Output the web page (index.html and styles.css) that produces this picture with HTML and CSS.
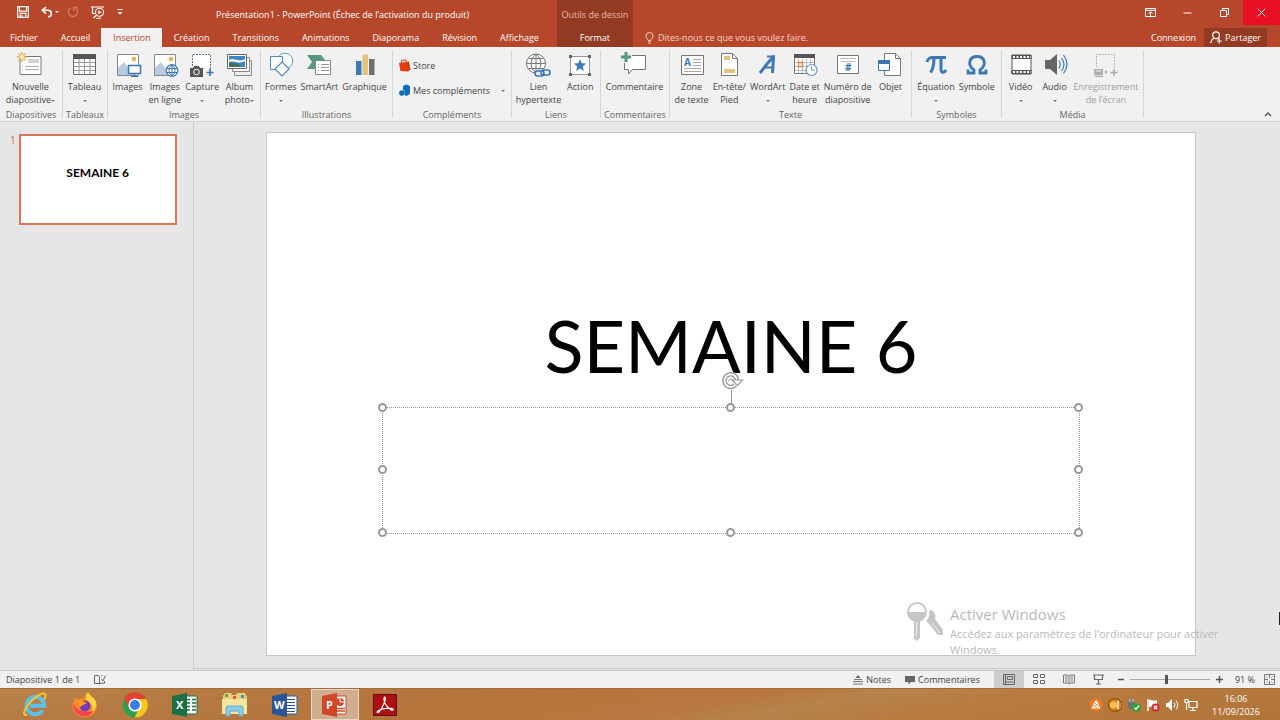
FILE: index.html
```html
<!DOCTYPE html>
<html lang="fr">
<head>
<meta charset="utf-8">
<title>Présentation1 - PowerPoint</title>
<link rel="stylesheet" href="styles.css">
</head>
<body>
<header class="titlebar">
  <div class="caption">
    <div class="quick">
      <button aria-label="Enregistrer"><svg width="12" height="12" viewBox="0 0 12 12"><path d="M.7.7h10.6v10.6H.7zM2.5 1v4.2h7V1M3.2 11V7.4h5.6V11M5 9v2" fill="none" stroke="#fff" stroke-width="1.2"/></svg></button>
      <button class="undo" aria-label="Annuler"><svg width="12" height="12" viewBox="0 0 12 12"><path d="M5 1 1.2 4.3 5 7.6M1.5 4.3H7a3.3 3.3 0 0 1 0 6.6" fill="none" stroke="#fff" stroke-width="1.6"/></svg><i class="caret"></i></button>
      <button aria-label="Répéter"><svg width="12" height="12" viewBox="0 0 12 12"><path d="M3.2 2.2a4.6 4.6 0 1 0 5.6.1M6.7 5V1.5h3.8" fill="none" stroke="#cf7a62" stroke-width="1.4"/></svg></button>
      <button aria-label="Diaporama"><svg width="14" height="13" viewBox="0 0 14 13"><path d="M0 1h13M1.5 1v6.5H5M2.5 12 6 8.5" fill="none" stroke="#fff" stroke-width="1.2"/><circle cx="8.5" cy="6.3" r="4" fill="#b7472a" stroke="#fff" stroke-width="1.1"/><path d="m7.3 4.3 3.3 2-3.3 2z" fill="#fff"/><path d="M5 12.3h5" stroke="#fff"/></svg></button>
      <button aria-label="Personnaliser"><svg width="6" height="8" viewBox="0 0 6 8"><path d="M.5 1.5h5" stroke="#fff"/><path d="M.5 4h5L3 6.8z" fill="#fff"/></svg></button>
    </div>
    <h1 class="doc-title">Présentation1 - PowerPoint (Échec de l’activation du produit)</h1>
  </div>
  <nav class="tabs">
    <button>Fichier</button><button>Accueil</button><button class="active">Insertion</button><button>Création</button><button>Transitions</button><button>Animations</button><button>Diaporama</button><button>Révision</button><button>Affichage</button>
  </nav>
  <div class="context"><span>Outils de dessin</span><button>Format</button></div>
  <div class="window-controls">
    <button aria-label="Options du ruban"><svg width="11" height="9" viewBox="0 0 11 9"><path d="M.5.5h10v8H.5zM.5 2.3h10M5.5 8V4M3.6 5.6l1.9-1.9 1.9 1.9" fill="none" stroke="#fff"/></svg></button>
    <button aria-label="Réduire"><svg width="9" height="9" viewBox="0 0 9 9"><path d="M.5 5h8" stroke="#fff"/></svg></button>
    <button aria-label="Restaurer"><svg width="9" height="9" viewBox="0 0 9 9"><path d="M.5 2.5h6v6h-6zM2.5 2V.5h6v6H7" fill="none" stroke="#fff"/></svg></button>
    <button class="close" aria-label="Fermer"><svg width="9" height="9" viewBox="0 0 9 9"><path d="m.7.7 7.6 7.6M8.3.7.7 8.3" stroke="#fff"/></svg></button>
  </div>
  <div class="tools">
    <label class="tell"><svg width="9" height="12" viewBox="0 0 9 12"><path d="M3 8.400C3 7 1 6 1 4a3.500 3.500 0 0 1 7 0c0 2-2 3-2 4.400zM3.200 9.800h2.600M3.500 11.300h2" fill="none" stroke="#f6d5cb"/></svg><input type="text" aria-label="Rechercher" placeholder="Dites-nous ce que vous voulez faire."></label>
    <button class="login">Connexion</button>
    <button class="share"><svg width="12" height="13" viewBox="0 0 12 13"><circle cx="6" cy="4.200" r="3.400" fill="none" stroke="#fff" stroke-width="1.200"/><path d="M.8 12c.2-2.600 1.400-4 3.400-4.700M7.500 7.500l1 .8M9.300 7.500v5M6.800 10h5" fill="none" stroke="#fff" stroke-width="1.200"/></svg>Partager</button>
  </div>
</header>

<section class="ribbon" aria-label="Insertion">
  <div class="group g-slides">
    <div class="items">
      <button><svg class="ic" viewBox="0 0 28 26"><path d="M4 5.500h21v18H4z" fill="#fff" stroke="#777"/><path d="M12 8h11v4H12z" fill="#d2d2d2"/><path d="M9 15.500h14M9 18.500h14M6 15.500h1M6 18.500h1" stroke="#aaa"/><path d="M6 1v10M1 6h10M2.500 2.500l7 7M9.500 2.500l-7 7" stroke="#e8b658" stroke-width="1.500"/><circle cx="6" cy="6" r="2" fill="#fff3cf"/></svg><span>Nouvelle<br>diapositive<i class="caret"></i></span></button>
    </div><h2>Diapositives</h2>
  </div>
  <div class="group g-tables">
    <div class="items">
      <button><svg class="ic" viewBox="0 0 28 26"><path d="M2.500 4.500h22v19h-22z" fill="#fff" stroke="#666"/><path d="M2 3h23v5H2z" fill="#555"/><path d="M3 11.500h21M3 15.500h21M3 19.500h21M8 8v15M13.500 8v15M19 8v15" stroke="#999"/></svg><span>Tableau<br><i class="caret"></i></span></button>
    </div><h2>Tableaux</h2>
  </div>
  <div class="group g-images">
    <div class="items even">
      <button><svg class="ic" viewBox="0 0 28 26"><path d="M3.500 3.500h21v21h-21z" fill="#fff" stroke="#888"/><path d="M4 24v-7l6-6 9 13z" fill="#b7cbe3"/><circle cx="20" cy="8" r="2.300" fill="#e4b552"/><path d="M14.500 14.500h12v8h-12z" fill="#fff" stroke="#3b76b5" stroke-width="1.500"/><path d="M20.500 23v2M17 25.500h7" stroke="#3b76b5" stroke-width="1.300"/></svg><span>Images</span></button>
      <button><svg class="ic" viewBox="0 0 28 26"><path d="M3.500 3.500h21v21h-21z" fill="#fff" stroke="#888"/><path d="M4 24v-7l6-6 9 13z" fill="#b7cbe3"/><circle cx="20" cy="8" r="2.300" fill="#e4b552"/><circle cx="21" cy="19.500" r="5.800" fill="#fff" stroke="#3b76b5" stroke-width="1.200"/><path d="M15.500 17.500h11M15.500 21.500h11M21 14v11M21 14c-4 3-4 8 0 11c4-3 4-8 0-11" fill="none" stroke="#3b76b5"/></svg><span>Images<br>en ligne</span></button>
      <button><svg class="ic" viewBox="0 0 28 26"><path d="M4.500 15V3.500h18V18" fill="#fff" stroke="#777" stroke-dasharray="2 1"/><path d="M2 17h3l1-2h5l1 2h3v9H2z" fill="#555"/><circle cx="8.500" cy="21" r="2.800" fill="#555" stroke="#fff"/><path d="M22 18v7M18.500 21.500h7" stroke="#3b76b5" stroke-width="1.700"/></svg><span>Capture<br><i class="caret"></i></span></button>
      <button><svg class="ic" viewBox="0 0 28 26"><path d="M12.500 9.500h14v15h-17v-4" fill="#eee" stroke="#888"/><path d="M7.500 6.500h17v14h-17z" fill="#fff" stroke="#888"/><path d="M2.500 3.500h19v14h-19z" fill="#fff" stroke="#666"/><path d="M4 5h16v11H4z" fill="#3b86c4"/><path d="M4 9c5-3 9 3 16-1v2c-7 4-10-1-16 1z" fill="#fff"/><path d="M4 16v-4c5-1 9 0 13 4z" fill="#44705c"/></svg><span>Album<br>photo<i class="caret"></i></span></button>
    </div><h2>Images</h2>
  </div>
  <div class="group g-illus">
    <div class="items">
      <button><svg class="ic" viewBox="0 0 28 26"><circle cx="18" cy="10" r="7.800" fill="#f9f9f9" stroke="#6d9bc9"/><path d="M3.500 5.500h12v13h-12z" fill="#fff" stroke="#5288bd"/><path d="m15 11 7 7-7 7-7-7z" fill="#fff" stroke="#5288bd" stroke-width="1.200"/></svg><span>Formes<br><i class="caret"></i></span></button>
      <button><svg class="ic" viewBox="0 0 28 26"><path d="M2 4h14l5 6-5 8H2l5-7z" fill="#559a80"/><path d="M10.500 9.500h15v14h-15z" fill="#fff" stroke="#888"/><path d="M13 13.500h1M16 13.500h8M13 16.500h1M16 16.500h8M13 19.500h1M16 19.500h8" stroke="#999"/></svg><span>SmartArt</span></button>
      <button><svg class="ic" viewBox="0 0 28 26"><path d="M5 10h5.500v14H5z" fill="#3e78b3"/><path d="M11.500 3.500H17V24h-5.500z" fill="#e3c27c"/><path d="M18 8h5.500v16H18z" fill="#6f706c"/></svg><span>Graphique</span></button>
    </div><h2>Illustrations</h2>
  </div>
  <div class="group g-addins">
    <div class="stack">
      <button><svg width="12" height="13" viewBox="0 0 12 13"><path d="M0 4 10 2.500l1 8.500-2 1.500L1.500 12z" fill="#e33d0b"/><path d="M2.500 4V1.500L7 .8V3" fill="none" stroke="#e33d0b"/><path d="m9 3 2 8" stroke="#b52c05"/></svg>Store</button>
      <button class="wide"><svg width="12" height="13" viewBox="0 0 12 13"><path d="m4 2 3.500-1.500L11 2v8L7.500 12 5.500 11V7L4 6z" fill="#0a6ebd"/><circle cx="2.800" cy="9" r="2.700" fill="#0a6ebd"/></svg>Mes compléments<i class="caret"></i></button>
    </div><h2>Compléments</h2>
  </div>
  <div class="group g-links">
    <div class="items">
      <button><svg class="ic" viewBox="0 0 28 26"><circle cx="12" cy="12.500" r="9.500" fill="#fff" stroke="#777"/><path d="M12 3v19M2.500 12.500h19M4.500 7.500h15M4.500 17.500h15M12 3c-6.500 5-6.500 14 0 19c6.500-5 6.500-14 0-19" fill="none" stroke="#777"/><rect x="11" y="20" width="9" height="5" rx="2.500" fill="#f1f1f1" stroke="#3b76b5" stroke-width="1.600"/><rect x="17" y="19" width="9" height="5" rx="2.500" fill="none" stroke="#3b76b5" stroke-width="1.600"/></svg><span>Lien<br>hypertexte</span></button>
      <button><svg class="ic" viewBox="0 0 28 26"><path d="M4.500 5.500h19v18h-19z" fill="#fff" stroke="#999"/><path d="M3 4h3v3H3zM22 4h3v3h-3zM3 22h3v3H3zM22 22h3v3h-3z" fill="#666"/><path d="m14 8 1.700 4.300 4.600.3-3.600 2.900 1.200 4.500-3.900-2.500-3.900 2.500 1.200-4.500-3.600-2.900 4.600-.3z" fill="#3e7cc0"/></svg><span>Action</span></button>
    </div><h2>Liens</h2>
  </div>
  <div class="group g-comments">
    <div class="items">
      <button><svg class="ic" viewBox="0 0 28 26"><path d="M4.500 4.500h21v14h-13l-4 4.500v-4.500h-4z" fill="#fff" stroke="#777"/><path d="M6 0v12M0 6h12" stroke="#f1f1f1" stroke-width="5"/><path d="M6 1v10M1 6h10" stroke="#559a80" stroke-width="3"/></svg><span>Commentaire</span></button>
    </div><h2>Commentaires</h2>
  </div>
  <div class="group g-text">
    <div class="items">
      <button><svg class="ic" viewBox="0 0 28 26"><path d="M3.500 4.500h22v19h-22z" fill="#fff" stroke="#777"/><path d="M15 8.500h8M15 11.500h8M15 14.500h8M6 17.500h17M6 20.500h17" stroke="#aaa"/><text x="6" y="15" class="glyph g10">A</text></svg><span>Zone<br>de texte</span></button>
      <button><svg class="ic" viewBox="0 0 28 26"><path d="M6.500 2.500h11l5 5v17h-16z" fill="#fff" stroke="#777"/><path d="M17.500 2.500v5h5" fill="none" stroke="#777"/><path d="M9 5h6v4H9zM9 18h11v4H9z" fill="#e3c27c"/></svg><span>En-tête/<br>Pied</span></button>
      <button><svg class="ic" viewBox="0 0 28 26"><path d="M6 22 13 13 19.500 5.500 18.500 22" fill="none" stroke="#3e78b3" stroke-width="3" stroke-linejoin="round"/><path d="M9.500 16.500h9M13 5.500h7" stroke="#3e78b3" stroke-width="2"/></svg><span>WordArt<br><i class="caret"></i></span></button>
      <button><svg class="ic" viewBox="0 0 28 26"><path d="M3.500 3.500h20v19h-20z" fill="#fff" stroke="#777"/><path d="M3 3h21v4H3z" fill="#555"/><path d="M4 11.500h19M4 15.500h19M4 19.500h19M7.500 8v14M11.500 8v14M15.500 8v14M19.500 8v14" stroke="#bbb"/><path d="M7.500 11.500h4v4h-4z" fill="#fff" stroke="#e08443" stroke-width="1.300"/><circle cx="20.500" cy="19" r="5.500" fill="#fff" stroke="#6693bf" stroke-width="1.200"/><path d="M20.500 15.500V19h3" fill="none" stroke="#6693bf"/></svg><span>Date et<br>heure</span></button>
      <button><svg class="ic" viewBox="0 0 28 26"><path d="M3.500 4.500h21v18h-21z" fill="#fff" stroke="#777"/><path d="M6 7.500h16M7 10.500h14" stroke="#bbb"/><text x="11" y="20" class="glyph g10">#</text></svg><span>Numéro de<br>diapositive</span></button>
      <button><svg class="ic" viewBox="0 0 28 26"><path d="M8.500 2.500h11l5 5v17h-16z" fill="#fff" stroke="#777"/><path d="M19.500 2.500v5h5" fill="none" stroke="#777"/><path d="M2.500 9.500h11v10h-11z" fill="#fff" stroke="#3b76b5"/><path d="M2 9h12v4H2z" fill="#3b76b5"/></svg><span>Objet</span></button>
    </div><h2>Texte</h2>
  </div>
  <div class="group g-symbols">
    <div class="items">
      <button><svg class="ic" viewBox="0 0 28 26"><path d="M5 11C6 7 8 6.500 11 6.500h13M12 7c0 7-.5 11-3.500 14.500M19 7v11c0 4 3 4.500 5 1" fill="none" stroke="#3e78b3" stroke-width="3"/></svg><span>Équation<br><i class="caret"></i></span></button>
      <button><svg class="ic" viewBox="0 0 28 26"><path d="M5 18.500v3.500h6v-3C4 14 6 5.500 14 5.500S24 14 17 19v3h6v-3.500" fill="none" stroke="#3e78b3" stroke-width="2.800"/></svg><span>Symbole</span></button>
    </div><h2>Symboles</h2>
  </div>
  <div class="group g-media">
    <div class="items">
      <button><svg class="ic" viewBox="0 0 28 26"><path d="M5 4h19v19H5z" fill="#fff" stroke="#555"/><path d="M4.500 6h20M4.500 21h20" stroke="#555" stroke-width="4"/><path d="M6 6h18M6 21h18" stroke="#fff" stroke-width="2" stroke-dasharray="2 1.500"/></svg><span>Vidéo<br><i class="caret"></i></span></button>
      <button><svg class="ic" viewBox="0 0 28 26"><path d="M4 9h5l7-6v21l-7-6H4z" fill="#666"/><path d="M18 9.500q2.500 4 0 8M20.500 7q5 6.500 0 13M22.500 4q7 9.500 0 18.500" fill="none" stroke="#3e78b3" stroke-width="1.200"/></svg><span>Audio<br><i class="caret"></i></span></button>
      <button disabled><svg class="ic" viewBox="0 0 28 26"><path d="M4.500 16V3.500h18V18" fill="none" stroke="#b5b5b5" stroke-dasharray="2 1"/><path d="M2 18h9v6H2zM12 21l3-2v4z" fill="#b0b0b0"/><path d="M4 20h5" stroke="#eee"/><path d="M22 18v7M18.500 21.500h7M3 25.500h8" stroke="#aaa" stroke-width="1.500"/></svg><span>Enregistrement<br>de l’écran</span></button>
    </div><h2>Média</h2>
  </div>
  <button class="collapse" aria-label="Réduire le ruban"><svg width="8" height="6" viewBox="0 0 8 6"><path d="m1 5 3-3 3 3" fill="none" stroke="#555" stroke-width="1.500"/></svg></button>
</section>

<main class="workspace">
  <aside class="thumbs"><span class="num">1</span><button class="thumb">SEMAINE 6</button></aside>
  <section class="stage">
    <article class="slide">
      <h2 class="slide-title">SEMAINE 6</h2>
      <div class="placeholder">
        <i class="stem"></i>
        <svg class="rotate" width="22" height="18" viewBox="0 0 22 18"><path d="M13.300 13A6.300 6.300 0 1 1 15 8.500" fill="none" stroke="#999" stroke-width="4.500"/><path d="M13.300 13A6.300 6.300 0 1 1 15 8.500" fill="none" stroke="#fff" stroke-width="1.800"/><path d="M10 8h10.500l-5 5.500z" fill="#fff" stroke="#999" stroke-width="1.200"/><path d="M6.500 9.500a2.500 2.500 0 0 1 4-2" fill="none" stroke="#999"/></svg>
        <i class="h nw"></i><i class="h n"></i><i class="h ne"></i><i class="h w"></i><i class="h e"></i><i class="h sw"></i><i class="h s"></i><i class="h se"></i>
      </div>
    </article>
    <i class="pointer"></i>
  </section>
  <div class="watermark">
    <svg width="37" height="40" viewBox="0 0 37 40"><path d="m22 9 3-1c3 3 4 6 3 9l8 11v5h-5l-9-11-3-3c3-3 4-6 3-10z" fill="#c6c6c6"/><path d="m25 21 8 10" stroke="#eee"/><circle cx="10" cy="10" r="9" fill="#fff" stroke="#c6c6c6" stroke-width="2"/><path d="M1 10h18c0 5-2 8-6 9v17l-3 3-3-3V19c-4-1-6-4-6-9z" fill="#c6c6c6"/><path d="M9.500 20v15" stroke="#eee"/></svg>
    <div><strong>Activer Windows</strong><p>Accédez aux paramètres de l’ordinateur pour activer Windows.</p></div>
  </div>
</main>

<footer class="status">
  <span>Diapositive 1 de 1</span>
  <button class="spell" aria-label="Orthographe"><svg width="12" height="11" viewBox="0 0 12 11"><path d="M5.500 9.500H.5v-8h3.500l1.500 1V10l1.500-.8h3.500V7M7 1.500h1M7.500 5l1.500 2L11.500 1.500" fill="none" stroke="#666"/></svg></button>
  <button class="notes"><svg width="10" height="10" viewBox="0 0 10 10"><path d="m5 0 2.500 3h-5z" fill="#666"/><path d="M1 4.500h8M0 6.500h10M0 9h10" stroke="#777"/></svg>Notes</button>
  <button class="comm"><svg width="10" height="10" viewBox="0 0 10 10"><path d="M0 1h10v6H6L3.500 9.500V7H0z" fill="#666"/></svg>Commentaires</button>
  <div class="views">
    <button class="on" aria-label="Normal"><svg width="12" height="11" viewBox="0 0 12 11"><path d="M.5.5h11v10H.5zM2.500 1v9M4.500 2.500h5v3h-5zM3 8h7.500" fill="none" stroke="#666"/></svg></button>
    <button aria-label="Trieuse"><svg width="12" height="11" viewBox="0 0 12 11"><path d="M.5.5h4v3h-4zM7.500.5h4v3h-4zM.5 6.500h4v3h-4zM7.500 6.500h4v3h-4z" fill="none" stroke="#666"/></svg></button>
    <button aria-label="Lecture"><svg width="12" height="11" viewBox="0 0 12 11"><path d="M.5 1h4l1.500 1 1.500-1h4v8h-4L6 10 4.500 9h-4zM6 2v8M2 3h2.500M2 5h2.500M2 7h2.500M7.500 3H10M7.500 5H10M7.500 7H10" fill="none" stroke="#777"/></svg></button>
    <button aria-label="Diaporama"><svg width="11" height="11" viewBox="0 0 11 11"><path d="M0 1h11M1.500 1v4.500h8V1M5.500 5.500V10M3 10h5" fill="none" stroke="#666" stroke-width="1.200"/></svg></button>
  </div>
  <div class="zoom"><button aria-label="Zoom arrière"><svg width="6" height="7" viewBox="0 0 6 7"><path d="M0 3.500h6" stroke="#555" stroke-width="1.500"/></svg></button><input type="range" aria-label="Zoom" min="0" max="100" value="46"><button aria-label="Zoom avant"><svg width="7" height="7" viewBox="0 0 7 7"><path d="M0 3.500h7M3.500 0v7" stroke="#555" stroke-width="1.500"/></svg></button></div>
  <button class="pct">91 %</button>
  <button class="fit" aria-label="Ajuster"><svg width="11" height="11" viewBox="0 0 11 11"><path d="M.5.5h10v10H.5z" fill="none" stroke="#777"/><path d="M5.500 1v3M5.500 7v3M1 5.500h3M7 5.500h3M2.500 2.500l1 1M8.500 2.500l-1 1M2.500 8.500l1-1M8.500 8.500l-1-1" stroke="#777"/></svg></button>
</footer>

<footer class="taskbar">
  <div class="apps">
    <button aria-label="Internet Explorer"><svg width="26" height="26" viewBox="0 0 26 26"><path d="M20.500 18.500A8.700 8.700 0 1 1 22 13.800H8" fill="none" stroke="#56c3ec" stroke-width="4"/><path d="M5 22.500c-4 2-4-3 1-9.500S20-.5 23 2c1.500 1.500 0 4-1 5.500" fill="none" stroke="#f2c530" stroke-width="2"/></svg></button>
    <button aria-label="Firefox"><svg width="26" height="26" viewBox="0 0 26 26"><path d="M3 6c1 0 2 1 3 2 2-2 4-2 6-2 0-3 2-5 4-6 1 3 6 5 8 10 3 8-3 15-11 15S-1 19 1 11z" fill="#ff8a24"/><path d="M16 0c1 3 6 5 8 10 1 4-1 9-5 11 3-6 1-10-5-13 0-3 0-6 2-8z" fill="#ffd43d"/><path d="M1 12c3 5 10 10 20 7-3 8-19 8-20-7z" fill="#f4424f"/><circle cx="13" cy="14" r="5.500" fill="#763bb4"/><path d="M6 9c4-1 6 1 9 2-2 2-5 1-6 4-3-1-4-4-3-6z" fill="#ff9b25"/></svg></button>
    <button aria-label="Chrome"><svg width="26" height="26" viewBox="0 0 26 26"><circle cx="13" cy="13" r="12.500" fill="#2da150"/><path d="M2 7a12.500 12.500 0 0 1 22.200 0H13v6z" fill="#e34133"/><path d="M24.200 7A12.500 12.500 0 0 1 12.500 25.500L18 15l-3-8z" fill="#fbc51b"/><path d="M2 7l5.500 9 5-9z" fill="#e34133"/><circle cx="13" cy="13" r="6.600" fill="#fff"/><circle cx="13" cy="13" r="5" fill="#3b7de6"/></svg></button>
    <button aria-label="Excel"><svg width="26" height="24" viewBox="0 0 26 24"><path d="M13 3h12v18H13z" fill="#fff" stroke="#1c7044"/><path d="M15 6.500h3M20 6.500h4M15 10h3M20 10h4M15 13.500h3M20 13.500h4M15 17h3M20 17h4" stroke="#1c7044" stroke-width="1.700"/><path d="m0 3 15-3v24L0 21z" fill="#1c7044"/><text x="4" y="16" class="app-letter">X</text></svg></button>
    <button aria-label="Explorateur"><svg width="28" height="25" viewBox="0 0 28 25"><path d="M2 4l2-3h6l1 2h4l1-2h8l2 4v17H2z" fill="#e9cf75"/><path d="M4 2h3v3H4z" fill="#56a85c"/><path d="M12 4h3v3h-3z" fill="#d95b49"/><path d="M20 3h3v3h-3z" fill="#5489cf"/><path d="M1 7h25v15H1z" fill="#f7e6a0"/><path d="M5 24v-8q0-2 2-2h13q2 0 2 2v8h-4v-5H9v5z" fill="#8bcde9" stroke="#66a9cb"/></svg></button>
    <button aria-label="Word"><svg width="26" height="24" viewBox="0 0 26 24"><path d="M13 3h12v18H13z" fill="#fff" stroke="#2a5699"/><path d="M15 6.500h8M15 9.500h8M15 12.500h8M15 15.500h8M15 18.500h8" stroke="#2a5699"/><path d="m0 3 15-3v24L0 21z" fill="#2a5699"/><text x="2" y="16" class="app-letter">W</text></svg></button>
    <button class="running" aria-label="PowerPoint"><svg width="26" height="24" viewBox="0 0 26 24"><path d="M13 3h11v18H13z" fill="#fff" stroke="#d04727"/><circle cx="18" cy="9" r="4" fill="#d04727"/><path d="M18 9V4M18 9h5" stroke="#fff"/><path d="M15 15.500h8M15 18h8" stroke="#d04727" stroke-width="1.300"/><path d="m0 3 15-3v24L0 21z" fill="#d04727"/><text x="4" y="16" class="app-letter">P</text></svg></button>
    <button aria-label="Acrobat"><svg width="24" height="22" viewBox="0 0 24 22"><path d="M.5.500h23v21H.5z" fill="#ad1010" stroke="#690808"/><path d="M4 18c2-3 13-5 16-3 1 1-1 2-3 0C13 12 10 7 11 4c1-2 2 0 1 3S7 18 5 18.500z" fill="none" stroke="#fff" stroke-width="1.200"/></svg></button>
  </div>
  <div class="tray">
    <svg viewBox="0 0 14 14"><circle cx="7" cy="7" r="6.500" fill="#f47a20"/><path d="M2.500 10.500 6 3q1-1 2 0l3.500 7.500z" fill="#fff"/><path d="m6 5 4 4M5 7l3 3" stroke="#f47a20"/></svg>
    <svg viewBox="0 0 14 14"><path d="m0 4 4-3h6l4 4v5l-4 3H4l-3-3z" fill="#d9821f" stroke="#7d4610"/><circle cx="5.500" cy="7" r="3.500" fill="#ffbf54"/><path d="M10 3v8" stroke="#fff0cf" stroke-width="1.500"/></svg>
    <svg viewBox="0 0 14 14"><path d="M2 1h5v3h1v7H2L1 8V4h1z" fill="#6c7478"/><path d="M3 1v3M6 1v3" stroke="#ddd"/><circle cx="9.500" cy="9.500" r="4.300" fill="#27a330"/><path d="m7.500 9.500 1.500 2 3-4" fill="none" stroke="#fff" stroke-width="1.300"/></svg>
    <svg viewBox="0 0 14 14"><path d="M2 1v12" stroke="#fff" stroke-width="1.500"/><path d="M3 2c3-1 4 2 8 0v7c-4 1-5-1-8 0z" fill="#fff"/><circle cx="9.500" cy="9.500" r="4" fill="#d6292c"/><path d="m7.800 7.800 3.400 3.400M11.200 7.800l-3.400 3.400" stroke="#fff" stroke-width="1.300"/></svg>
    <svg viewBox="0 0 14 14"><path d="M1 5h2l4-4v12L3 9H1z" fill="#fff"/><path d="M9 4.500q2 2.500 0 5M11 2.500q3.500 4.500 0 9" fill="none" stroke="#fff"/></svg>
    <svg viewBox="0 0 14 14"><path d="M5 3.500h8v6H5zM9 10v2M6 12.500h6M1 1.500h3v3H1zM2.500 5v7" fill="none" stroke="#fff" stroke-width="1.200"/></svg>
  </div>
  <time class="clock"><span>16:06</span><span>11/09/2026</span></time>
</footer>
</body>
</html>
```
FILE: styles.css
```css
* { box-sizing: border-box; }
body {
  margin: 0;
  min-height: 100vh;
  display: flex;
  flex-direction: column;
  background: #e6e6e6;
  color: #444;
  font: 9px/13px "Open Sans", "Noto Sans", sans-serif;
}
button {
  display: flex;
  align-items: center;
  justify-content: center;
  margin: 0;
  padding: 0;
  border: 0;
  background: none;
  color: inherit;
  font: inherit;
  white-space: nowrap;
}
h1, h2, p { margin: 0; font: inherit; }
svg { flex: none; display: block; }

.caret {
  display: inline-block;
  border: 2px solid transparent;
  border-top-color: currentColor;
  border-bottom: 0;
  margin-left: 2px;
  vertical-align: middle;
}

/* Title bar and tabs */
.titlebar {
  display: grid;
  grid-template-columns: auto 76px 1fr;
  grid-template-rows: 28px 19px;
  background: #b7472a;
  color: #fff;
}
.caption { display: flex; align-items: center; }
.quick { display: flex; align-items: center; gap: 12px; padding: 0 0 4px 17px; }
.quick .undo { margin-right: -4px; }
.doc-title { flex: 1; padding-left: 93px; }
.tabs { grid-row: 2; display: flex; padding-right: 7px; }
.tabs button { padding: 0 11px 0 12px; }
.tabs button:first-child { padding-left: 10px; }
.tabs .active { background: #f1f1f1; color: #b7472a; }
.context {
  grid-column: 2;
  grid-row: 1 / 3;
  display: grid;
  grid-template-rows: 28px 19px;
  align-items: center;
  justify-items: center;
  background: #933a22;
}
.context span { color: #eeb9a8; white-space: nowrap; }
.window-controls { grid-column: 3; grid-row: 1; display: flex; justify-content: flex-end; padding-bottom: 3px; }
.window-controls button { width: 37px; }
.window-controls .close { background: #e81123; }
.tools { grid-column: 3; grid-row: 2; display: flex; align-items: center; padding-right: 13px; }
.tell { flex: 1; display: flex; align-items: center; gap: 4px; padding-left: 12px; }
.tell input { width: 200px; padding: 0; border: 0; background: none; color: #fff; font: inherit; }
.tell input::placeholder { color: #f6d5cb; opacity: 1; }
.login { margin-right: 8px; }
.share { gap: 3px; height: 19px; padding: 0 6px; background: #933a22; }

/* Ribbon */
.ribbon { display: flex; background: #f1f1f1; border-bottom: 1px solid #d2d2d2; }
.group { display: flex; flex-direction: column; position: relative; padding: 4px 0 0; }
.group::after { content: ""; position: absolute; top: 3px; right: 0; bottom: 3px; border-right: 1px solid #d5d5d5; }
.group h2 { padding-right: 1px; text-align: center; color: #666; }
.items { display: flex; justify-content: center; min-height: 57px; padding-right: 2px; }
.items button { flex-direction: column; justify-content: flex-start; min-width: 34px; padding: 0 2px; }
.items.even button { flex: 1; padding: 0; }
.items.even { padding: 0 3px 0 1px; }
.items span { margin-top: 3px; line-height: 13px; }
.items .caret { color: #777; }
.items br + .caret { margin-left: 0; }
.items button:disabled { color: #a0a0a0; }
.ic { width: 28px; height: 26px; }
.glyph { fill: #3e78b3; font-family: "Open Sans", sans-serif; font-weight: 700; }
.g10 { font-size: 10px; }
.stack { display: flex; flex-direction: column; align-items: stretch; gap: 12px; min-height: 57px; padding: 8px 7px 0 6px; }
.stack button { justify-content: flex-start; gap: 2px; }
.stack .caret { margin-left: auto; color: #777; }
.g-slides { width: 63px; }
.g-tables { width: 45px; }
.g-images { width: 153px; }
.g-illus { width: 132px; }
.g-addins { width: 119px; }
.g-links { width: 89px; }
.g-comments { width: 69px; }
.g-text { width: 242px; }
.g-symbols { width: 90px; }
.g-media { width: 142px; }
.collapse { margin-left: auto; align-self: flex-end; padding: 4px 8px; }

/* Workspace */
.workspace { position: relative; flex: 1; display: flex; border-bottom: 1px solid #c6c6c6; }
.thumbs { flex: none; width: 194px; display: flex; align-items: flex-start; gap: 3px; padding: 12px 0 0 10px; border-right: 1px solid #cfcfcf; }
.num { color: #d2694c; font-size: 10px; }
.thumb { width: 158px; height: 91px; padding-bottom: 14px; border: 2px solid #d9775a; background: #fff; color: #000; font: 700 12px/16px Lato, sans-serif; }
.stage { flex: 1; display: flex; padding: 10px 84px 12px 72px; margin-bottom: 1px; border-bottom: 1px solid #c6c6c6; }
.slide { position: relative; flex: 1; border: 1px solid #c8c8c8; background: #fff; }
.slide-title { position: absolute; left: 0; right: 0; top: 32%; text-align: center; color: #000; font: 72px/90px Lato, sans-serif; }
.placeholder { position: absolute; left: 12.4%; right: 12.4%; top: 52.4%; bottom: 23.2%; border: 1px dotted #999; }
.h { position: absolute; width: 9px; height: 9px; margin: -5px; border: 2px solid #999; border-radius: 50%; background: #fff; }
.nw, .w, .sw { left: 0; }
.n, .s { left: 50%; }
.ne, .e, .se { left: 100%; }
.nw, .n, .ne { top: 0; }
.w, .e { top: 50%; }
.sw, .s, .se { top: 100%; }
.stem { position: absolute; left: 50%; bottom: 100%; height: 18px; border-left: 1px solid #999; }
.rotate { position: absolute; left: 50%; bottom: 100%; margin: 0 0 18px -9px; }
.pointer { position: absolute; right: 0; top: 490px; width: 1px; height: 13px; background: #222; }
.watermark { position: absolute; right: 42px; bottom: 12px; display: flex; gap: 6px; width: 331px; color: #b9b9b9; font-size: 11px; line-height: 16px; }
.watermark strong { display: block; font-weight: 400; font-size: 15px; line-height: 24px; }

/* Status bar */
.status { display: flex; align-items: stretch; height: 17px; padding: 0 5px 0 6px; background: #f1f1f1; line-height: 17px; }
.spell { margin-left: 14px; }
.notes { gap: 3px; margin-left: auto; }
.comm { gap: 3px; margin: 0 14px; }
.views { display: flex; }
.views button { width: 30px; }
.views .on { background: #cdcdcd; }
.zoom { display: flex; gap: 6px; padding-left: 4px; }
.zoom input { -webkit-appearance: none; appearance: none; width: 80px; margin: 0; background: linear-gradient(#aaa, #aaa) center / 100% 1px no-repeat; }
.zoom input::-webkit-slider-thumb { -webkit-appearance: none; width: 3px; height: 9px; background: #555; }
.pct { margin-left: 12px; }
.fit { margin-left: 9px; }

/* Taskbar */
.taskbar { display: flex; align-items: stretch; height: 32px; border-top: 1px solid #a36c38; color: #fff; background: linear-gradient(170deg, #b9814a 0, #b47840 22%, #b5743a 38%, #b8783f 55%, #b5834d 62%, #b87b40 72%, #b17439 100%); }
.apps { display: flex; gap: 2px; padding-left: 11px; }
.apps button { width: 48px; }
.apps .running { border: 1px solid #e9d6c4; background: #cfae90; }
.app-letter { fill: #fff; font: 700 11px "Open Sans", sans-serif; }
.tray { display: flex; align-items: center; gap: 5px; margin-left: auto; }
.tray svg { width: 14px; height: 14px; }
.clock { display: flex; flex-direction: column; justify-content: center; align-items: center; width: 82px; padding-right: 6px; line-height: 13px; }
```
